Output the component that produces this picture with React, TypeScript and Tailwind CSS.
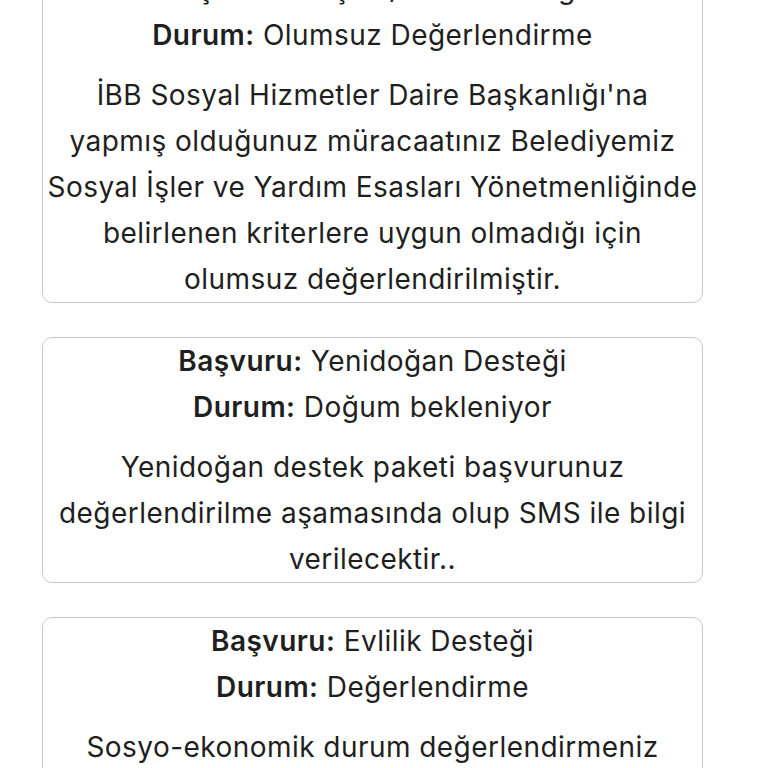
import React from "react";

type Card = { basvuru: string; durum: string; lines: string[] };

const cards: Card[] = [
  {
    basvuru: "Geçim / Gıda Desteği",
    durum: "Olumsuz Değerlendirme",
    lines: [
      "İBB Sosyal Hizmetler Daire Başkanlığı'na",
      "yapmış olduğunuz müracaatınız Belediyemiz",
      "Sosyal İşler ve Yardım Esasları Yönetmenliğinde",
      "belirlenen kriterlere uygun olmadığı için",
      "olumsuz değerlendirilmiştir.",
    ],
  },
  {
    basvuru: "Yenidoğan Desteği",
    durum: "Doğum bekleniyor",
    lines: [
      "Yenidoğan destek paketi başvurunuz",
      "değerlendirilme aşamasında olup SMS ile bilgi",
      "verilecektir..",
    ],
  },
  {
    basvuru: "Evlilik Desteği",
    durum: "Değerlendirme",
    lines: [
      "Sosyo-ekonomik durum değerlendirmeniz",
      "yapılmak üzere ekiplerimiz sizinle iletişime",
      "geçecektir.",
    ],
  },
];

export default function App() {
  return (
    <div
      className="w-[768px] h-[768px] overflow-hidden bg-white text-[#1f1f1f]"
      style={{ fontFamily: "Inter, 'Noto Sans', sans-serif" }}
    >
      <div className="mt-[-35px] ml-[42px] w-[661px] flex flex-col gap-[34px]">
        {cards.map((c, i) => (
          <div
            key={i}
            className="border-[1.5px] border-[#c9c9c9] rounded-[10px] text-center text-[28px] leading-[46px] tracking-[0.45px]"
          >
            <div className="whitespace-nowrap">
              <span className="font-semibold">Başvuru:</span> {c.basvuru}
            </div>
            <div className="whitespace-nowrap">
              <span className="font-semibold">Durum:</span> {c.durum}
            </div>
            <div className="mt-[14px]">
              {c.lines.map((l, j) => (
                <div key={j} className="whitespace-nowrap">
                  {l}
                </div>
              ))}
            </div>
          </div>
        ))}
      </div>
    </div>
  );
}
